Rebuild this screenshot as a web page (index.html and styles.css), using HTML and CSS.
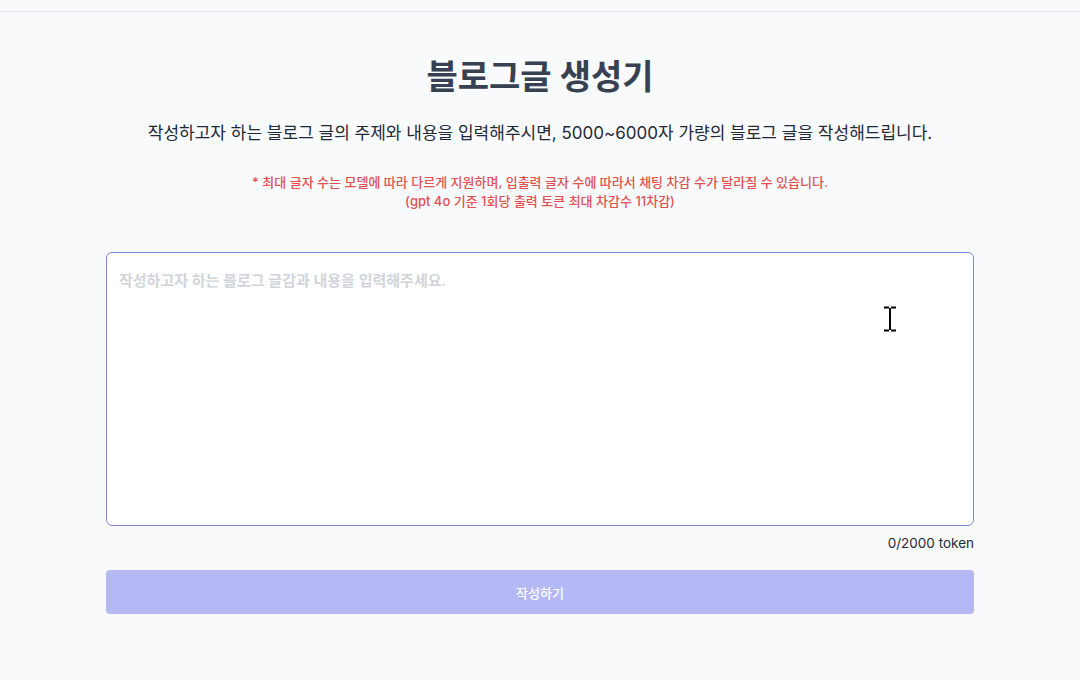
FILE: index.html
```html
<!DOCTYPE html>
<html lang="ko">
<head>
  <meta charset="UTF-8">
  <meta name="viewport" content="width=device-width, initial-scale=1.0">
  <title>블로그글 생성기</title>
  <link rel="stylesheet" href="styles.css">
</head>
<body>
  <header class="topbar"></header>

  <main class="container">
    <h1>블로그글 생성기</h1>
    <p class="desc">작성하고자 하는 블로그 글의 주제와 내용을 입력해주시면, 5000~6000자 가량의 블로그 글을 작성해드립니다.</p>
    <p class="notice">
      * 최대 글자 수는 모델에 따라 다르게 지원하며, 입출력 글자 수에 따라서 채팅 차감 수가 달라질 수 있습니다.<br>
      (gpt 4o 기준 1회당 출력 토큰 최대 차감수 11차감)
    </p>

    <div class="editor">
      <textarea id="content" placeholder="작성하고자 하는 블로그 글감과 내용을 입력해주세요."></textarea>
      <svg class="ibeam" width="14" height="26" viewBox="0 0 14 26">
        <path d="M1 1.5h5M8 1.5h5M7 2v22M1 24.5h5M8 24.5h5" stroke="#fff" stroke-width="3.5" fill="none"/>
        <path d="M1 1.5h5M8 1.5h5M7 2v22M1 24.5h5M8 24.5h5" stroke="#000" stroke-width="2" fill="none"/>
      </svg>
    </div>
    <div class="counter"><span id="count">0</span>/2000 token</div>

    <button id="submit" disabled>작성하기</button>
  </main>

  <script>
    const area = document.getElementById('content');
    const count = document.getElementById('count');
    const submit = document.getElementById('submit');

    area.addEventListener('input', () => {
      count.textContent = area.value.length;
      submit.disabled = area.value.trim() === '';
    });
  </script>
</body>
</html>
```

FILE: styles.css
```css
* {
  margin: 0;
  padding: 0;
  box-sizing: border-box;
}

body {
  background: #f9fafb;
  font-family: 'Inter', 'Noto Sans CJK KR', sans-serif;
  color: #1f2937;
}

.topbar {
  height: 12px;
  border-bottom: 1px solid #e5e7eb;
}

.container {
  max-width: 868px;
  margin: 0 auto;
  text-align: center;
}

h1 {
  margin-top: 42px;
  font-size: 34px;
  font-weight: 700;
  line-height: 46px;
  color: #374151;
}

.desc {
  margin-top: 20px;
  font-size: 17px;
  line-height: 26px;
  color: #1f2937;
}

.notice {
  margin-top: 27px;
  font-size: 13px;
  font-weight: 500;
  line-height: 19px;
  color: #e35050;
}

.editor {
  position: relative;
  margin-top: 41px;
}

textarea {
  display: block;
  width: 100%;
  height: 274px;
  padding: 18px 12px;
  border: 1px solid #7f87dc;
  border-radius: 6px;
  background: white;
  font-family: inherit;
  font-size: 15px;
  line-height: 20px;
  color: #1f2937;
  resize: none;
  outline: none;
}

textarea::placeholder {
  color: #d1d5db;
  font-weight: 600;
}

.ibeam {
  position: absolute;
  left: 777px;
  top: 54px;
  pointer-events: none;
}

.counter {
  margin-top: 9px;
  text-align: right;
  font-size: 13.5px;
  line-height: 16px;
  color: #1f2937;
}

button {
  display: block;
  width: 100%;
  height: 44px;
  margin-top: 19px;
  background: #6366f1;
  color: white;
  border: none;
  border-radius: 4px;
  font-family: inherit;
  font-size: 13px;
  font-weight: 500;
  cursor: pointer;
}

button:disabled {
  background: #b4b8f5;
  cursor: default;
}
```
